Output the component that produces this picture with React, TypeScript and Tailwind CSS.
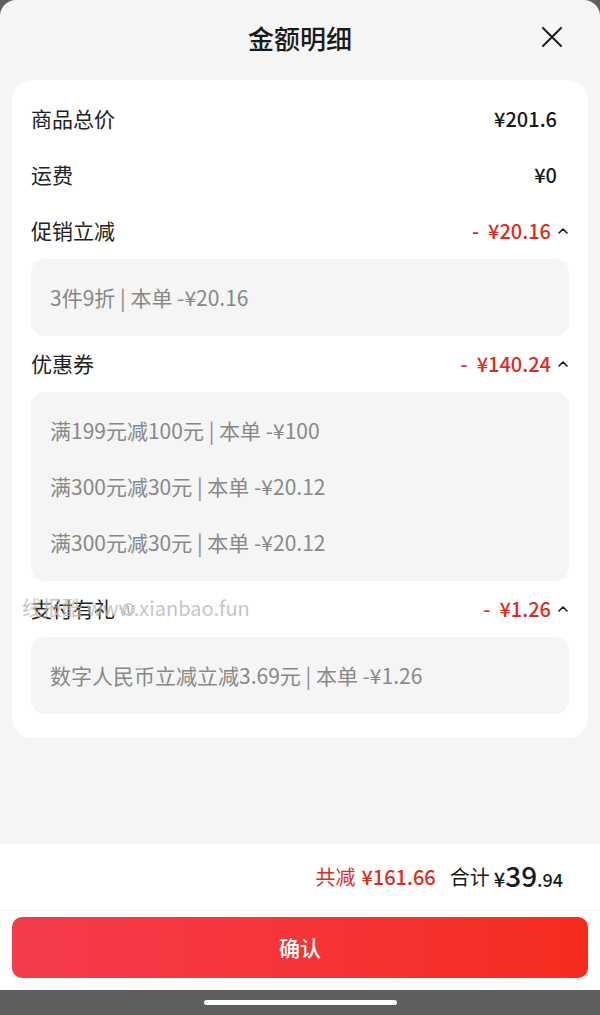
import React from "react";

const FONT = { fontFamily: '"Noto Sans CJK SC", "Noto Sans", sans-serif' };

type Row = { label: string; amount: string; red?: boolean; info?: boolean; details?: string[] };

const rows: Row[] = [
  { label: "商品总价", amount: "¥201.6" },
  { label: "运费", amount: "¥0" },
  { label: "促销立减", amount: "-  ¥20.16", red: true, details: ["3件9折 | 本单 -¥20.16"] },
  {
    label: "优惠券",
    amount: "-  ¥140.24",
    red: true,
    details: ["满199元减100元 | 本单 -¥100", "满300元减30元 | 本单 -¥20.12", "满300元减30元 | 本单 -¥20.12"],
  },
  { label: "支付有礼", amount: "-  ¥1.26", red: true, info: true, details: ["数字人民币立减立减3.69元 | 本单 -¥1.26"] },
];

function ChevronUp() {
  return (
    <svg width="12" height="12" viewBox="0 0 12 12" fill="none">
      <path d="M2 8 L6 4 L10 8" stroke="#1a1a1a" strokeWidth="1.6" strokeLinecap="round" strokeLinejoin="round" />
    </svg>
  );
}

function InfoIcon() {
  return (
    <svg width="13" height="13" viewBox="0 0 14 14" fill="none">
      <circle cx="7" cy="7" r="6" stroke="#999" strokeWidth="1" />
      <path d="M7 6 V10.2" stroke="#999" strokeWidth="1.2" strokeLinecap="round" />
      <circle cx="7" cy="4" r="0.8" fill="#999" />
    </svg>
  );
}

function CloseIcon() {
  return (
    <svg width="22" height="22" viewBox="0 0 22 22" fill="none">
      <path d="M2 2 L20 20 M20 2 L2 20" stroke="#1a1a1a" strokeWidth="2" strokeLinecap="round" />
    </svg>
  );
}

export default function App() {
  return (
    <div className="relative h-[1015px] w-[600px] bg-[#5e5e5e] overflow-hidden" style={FONT}>
      <div className="flex h-[990px] flex-col rounded-t-[16px] bg-[#f5f5f5]">
        {/* header */}
        <div className="relative flex h-[80px] items-center justify-center pb-[6px]">
          <span className="text-[26px] font-medium text-[#1a1a1a]">金额明细</span>
          <span className="absolute right-[37px] top-[26px]">
            <CloseIcon />
          </span>
        </div>

        {/* card */}
        <div className="mx-[12px] rounded-[20px] bg-white pt-[11px] pb-[24px]">
          {rows.map((r) => (
            <div key={r.label}>
              <div className="flex h-[56px] items-center px-[19px]">
                <span className="flex items-center gap-[7px] text-[21px] text-[#222]">
                  {r.label}
                  {r.info && <InfoIcon />}
                </span>
                <span className="ml-auto flex items-center">
                  <span
                    className={
                      r.red
                        ? "whitespace-pre text-[20px] font-medium text-[#dd2c21]"
                        : "text-[20px] font-medium text-[#1a1a1a]"
                    }
                  >
                    {r.amount}
                  </span>
                  {r.details ? (
                    <span className="ml-[6px] flex w-[12px] justify-center">
                      <ChevronUp />
                    </span>
                  ) : (
                    <span className="w-[12px]" />
                  )}
                </span>
              </div>
              {r.details && (
                <div className="mx-[19px] rounded-[14px] bg-[#f5f5f5] px-[19px] pt-[11px] pb-[10px]">
                  {r.details.map((d, i) => (
                    <div key={i} className="flex h-[56px] items-center text-[21px] text-[#888]">
                      {d}
                    </div>
                  ))}
                </div>
              )}
            </div>
          ))}
        </div>

        <div className="flex-1" />

        {/* footer total */}
        <div className="flex h-[67px] items-center justify-end border-b border-[#f0f0f0] bg-white pr-[37px]">
          <span className="text-[20px] text-[#dd2c21]">共减</span>
          <span className="ml-[6px] text-[20px] font-medium text-[#dd2c21]">¥161.66</span>
          <span className="ml-[14px] text-[20px] text-[#1a1a1a]">合计</span>
          <span className="ml-[4px] flex items-baseline text-[#1a1a1a]">
            <span className="text-[20px] font-medium">¥</span>
            <span className="text-[28px] font-medium leading-none">39</span>
            <span className="text-[18px] font-medium">.94</span>
          </span>
        </div>
        <div className="bg-white px-[12px] pt-[6px] pb-[12px]">
          <button className="flex h-[61px] w-full items-center justify-center rounded-[10px] bg-gradient-to-r from-[#f53b4c] to-[#f52c1c] text-[21px] font-medium text-white">
            确认
          </button>
        </div>
      </div>

      {/* home indicator */}
      <div className="flex h-[25px] items-center justify-center">
        <div className="h-[5px] w-[193px] rounded-full bg-white" />
      </div>

      {/* watermark */}
      <div className="pointer-events-none absolute left-[22px] top-[593px] text-[20px] text-[#b8b8b8] opacity-80">
        线报酷 www.xianbao.fun
      </div>
    </div>
  );
}
